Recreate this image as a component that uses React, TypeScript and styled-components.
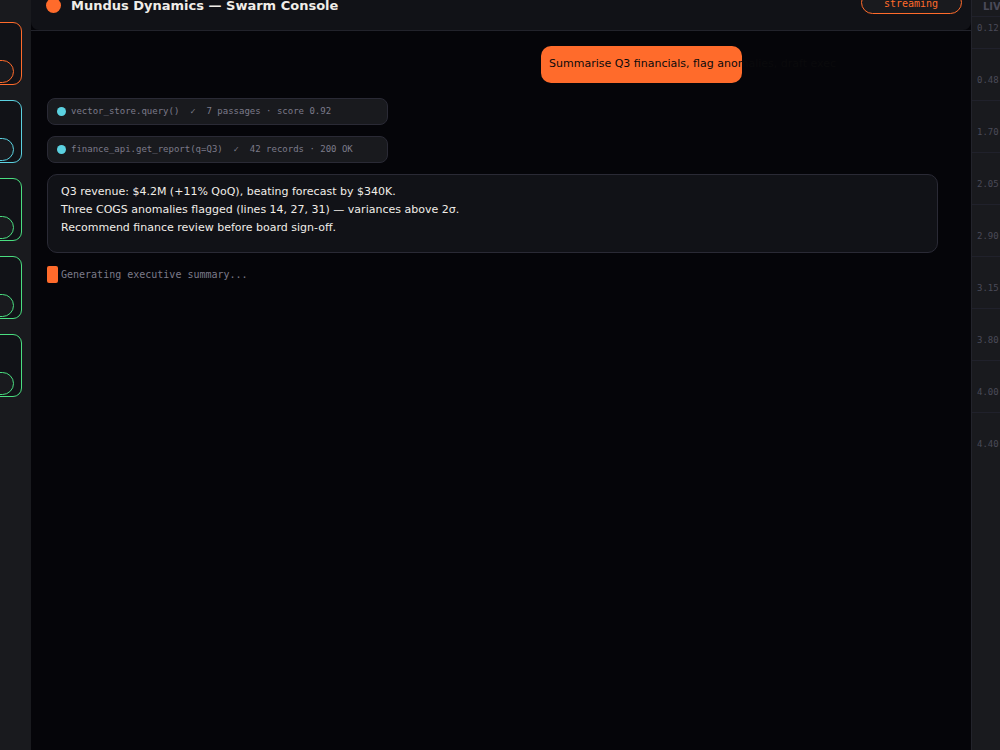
import React from 'react';
import styled, { createGlobalStyle } from 'styled-components';

const agents = ['#ff6b2b', '#5bd1e0', '#4ade80', '#4ade80', '#4ade80'];

const toolCalls = [
  'vector_store.query()  ✓  7 passages · score 0.92',
  'finance_api.get_report(q=Q3)  ✓  42 records · 200 OK',
];

const answer = [
  'Q3 revenue: $4.2M (+11% QoQ), beating forecast by $340K.',
  'Three COGS anomalies flagged (lines 14, 27, 31) — variances above 2σ.',
  'Recommend finance review before board sign-off.',
];

const events = ['0.12', '0.48', '1.70', '2.05', '2.90', '3.15', '3.80', '4.00', '4.40'];

const App = () => {
  return (
    <>
      <GlobalStyle />
      <Layout>
        <Sidebar>
          {agents.map((color, i) => (
            <AgentCard key={i} $color={color}>
              <AgentBadge $color={color} />
            </AgentCard>
          ))}
        </Sidebar>

        <Main>
          <HeaderFrame>
            <Header>
              <Brand>
                <Logo />
                <Title>Mundus Dynamics — Swarm Console</Title>
              </Brand>
              <StatusPill>streaming</StatusPill>
            </Header>
          </HeaderFrame>

          <Conversation>
            <UserMessage>Summarise Q3 financials, flag anomalies, draft exec</UserMessage>
            {toolCalls.map((call) => (
              <ToolCall key={call}>
                <ToolDot />
                <ToolText>{call}</ToolText>
              </ToolCall>
            ))}
            <Answer>
              {answer.map((line) => (
                <AnswerLine key={line}>{line}</AnswerLine>
              ))}
            </Answer>
            <Generating>
              <Cursor />
              <span>Generating executive summary...</span>
            </Generating>
          </Conversation>
        </Main>

        <EventPanel>
          <PanelTitle>LIVE EVENTS</PanelTitle>
          {events.map((time) => (
            <EventRow key={time}>{time}</EventRow>
          ))}
        </EventPanel>
      </Layout>
    </>
  );
};

const mono = `'DejaVu Sans Mono', monospace`;

const GlobalStyle = createGlobalStyle`
  * {
    box-sizing: border-box;
  }

  body {
    margin: 0;
    background: #050509;
    font-family: 'DejaVu Sans', sans-serif;
    overflow: hidden;
  }
`;

const Layout = styled.div`
  display: grid;
  grid-template-columns: 31px 940px 29px;
  height: 750px;
  overflow: hidden;
`;

const Sidebar = styled.aside`
  display: flex;
  flex-direction: column;
  align-items: flex-end;
  gap: 15px;
  padding: 22px 9px 0 0;
  background: #191a1e;
  overflow: hidden;
`;

const AgentCard = styled.div<{ $color: string }>`
  display: flex;
  flex-shrink: 0;
  justify-content: flex-end;
  align-items: flex-end;
  width: 200px;
  height: 63px;
  padding: 0 7px 1px 0;
  border: 1px solid ${({ $color }) => $color};
  border-radius: 9px;
  background: #111217;
`;

const AgentBadge = styled.div<{ $color: string }>`
  width: 60px;
  height: 23px;
  border: 1px solid ${({ $color }) => $color};
  border-radius: 12px;
  background: #191a1e;
`;

const Main = styled.main`
  display: flex;
  flex-direction: column;
  min-width: 0;
`;

const HeaderFrame = styled.div`
  height: 31px;
  border-bottom: 1px solid #22232b;
`;

const Header = styled.header`
  display: flex;
  justify-content: space-between;
  height: 30px;
  padding: 0 9px 0 15px;
  border-radius: 0 0 8px 8px;
  background: #111217;
`;

const Brand = styled.div`
  display: flex;
  align-items: center;
  gap: 10px;
  height: 15px;
  margin-top: -2px;
`;

const Logo = styled.div`
  width: 15px;
  height: 15px;
  border-radius: 50%;
  background: #ff6b2b;
`;

const Title = styled.h1`
  margin: 0;
  font-size: 13px;
  font-weight: bold;
  line-height: 15px;
  color: #f0ede8;
  white-space: nowrap;
`;

const StatusPill = styled.div`
  width: 101px;
  height: 23px;
  margin-top: -9px;
  padding-right: 1px;
  border: 1px solid #ff6b2b;
  border-radius: 12px;
  background: #191a1e;
  color: #ff6b2b;
  font-family: ${mono};
  font-size: 10px;
  line-height: 23px;
  text-align: center;
`;

const Conversation = styled.section`
  display: flex;
  flex-direction: column;
  align-items: flex-start;
  padding: 15px 33px 0 16px;
`;

const UserMessage = styled.div`
  align-self: flex-end;
  width: 201px;
  height: 37px;
  margin: 0 196px 15px 0;
  padding: 9px 8px;
  border-radius: 10px;
  background: #ff6b2b;
  color: #0a0a0c;
  font-size: 11px;
  line-height: 17px;
  white-space: nowrap;
`;

const ToolCall = styled.div`
  display: flex;
  align-items: center;
  gap: 5px;
  width: 341px;
  height: 27px;
  margin-bottom: 11px;
  padding-left: 9px;
  border: 1px solid #2a2a35;
  border-radius: 8px;
  background: #191a1e;
`;

const ToolDot = styled.div`
  width: 9px;
  height: 9px;
  border-radius: 50%;
  background: #5bd1e0;
`;

const ToolText = styled.span`
  padding-bottom: 2px;
  color: #7c7b8a;
  font-family: ${mono};
  font-size: 9px;
  white-space: pre;
`;

const Answer = styled.div`
  width: 891px;
  height: 79px;
  padding: 8px 13px;
  border: 1px solid #2a2a35;
  border-radius: 10px;
  background: #111217;
`;

const AnswerLine = styled.p`
  margin: 0;
  color: #f0ede8;
  font-size: 11px;
  line-height: 18px;
`;

const Generating = styled.div`
  display: flex;
  align-items: center;
  gap: 3px;
  margin-top: 13px;
  color: #7c7b8a;
  font-family: ${mono};
  font-size: 10px;
`;

const Cursor = styled.div`
  width: 11px;
  height: 17px;
  border-radius: 2px;
  background: #ff6b2b;
`;

const EventPanel = styled.aside`
  display: flex;
  flex-direction: column;
  border-left: 1px solid #22232b;
  background: #191a1e;
  overflow: hidden;
`;

const PanelTitle = styled.div`
  flex-shrink: 0;
  height: 17px;
  padding-left: 11px;
  border-bottom: 1px solid #20212b;
  color: #4a4a58;
  font-size: 10px;
  font-weight: bold;
  line-height: 14px;
  white-space: nowrap;
`;

const EventRow = styled.div`
  display: flex;
  flex-shrink: 0;
  align-items: flex-end;
  height: 52px;
  padding: 0 0 14px 5px;
  border-bottom: 1px solid #20212b;
  color: #4a4a58;
  font-family: ${mono};
  font-size: 9px;
  line-height: 11px;

  &:nth-child(2) {
    height: 32px;
  }

  &:last-child {
    padding-bottom: 15px;
    border-bottom: none;
  }
`;

export default App;
